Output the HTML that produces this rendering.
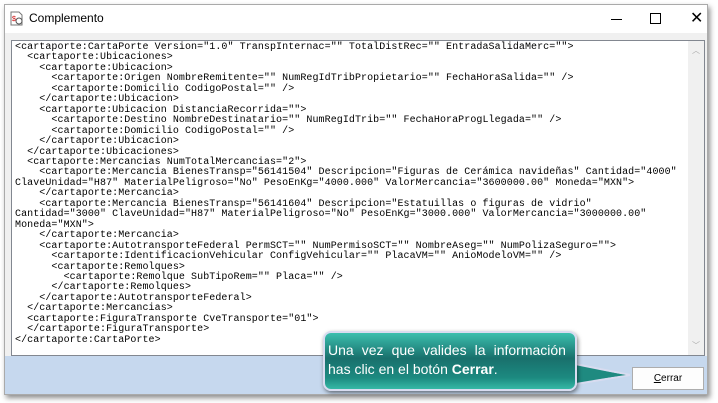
<!DOCTYPE html>
<html><head><meta charset="utf-8"><style>
body{margin:0;width:718px;height:403px;background:#fff;position:relative;overflow:hidden;font-family:"Liberation Sans",sans-serif}
.win{position:absolute;left:4px;top:4px;width:702px;height:389px;background:#f0f0f0;border:1px solid #aaa;box-shadow:2px 3px 5px rgba(0,0,0,.45)}
.title{position:absolute;left:0;top:0;width:702px;height:28px;background:#fff}
.title span{position:absolute;left:24px;top:6px;font-size:12px;color:#000}
.ta{position:absolute;left:6px;top:35px;width:692px;height:314px;background:#fff;border:1px solid #828790}
.sb{position:absolute;right:0;top:0;width:16px;height:314px;background:#f0f0f0}
pre{margin:0;position:absolute;left:3px;top:2px;font-family:"Liberation Mono",monospace;font-size:10px;letter-spacing:.07px;line-height:10.45px;color:#000}
.foot{position:absolute;left:0;top:351px;width:702px;height:38px;background:#c6d8ee}
.btn{position:absolute;left:627px;top:11px;width:70px;height:21px;background:#fdfdfd;border:1px solid #adadad;font-size:10px;text-align:center;line-height:21px}
.call{position:absolute;left:323px;top:331px;width:254px;height:60px;border:2px solid #d8dcf0;border-radius:8px;background:linear-gradient(#3bbfae,#19706c 45%,#1c8a80 80%,#36b8a6);box-shadow:1px 2px 4px rgba(0,0,0,.5);color:#fff;font-size:14px;line-height:19px;padding:8px 0 0 3px;box-sizing:border-box}
.l1{width:238px;text-align:justify;text-align-last:justify;white-space:nowrap;display:flex;justify-content:space-between}
</style></head><body>
<div class="win">
<div class="title">
<svg style="position:absolute;left:5px;top:6px" width="14" height="15" viewBox="0 0 14 15"><path d="M1 1h8l3 3v10H1z" fill="#fff" stroke="#777"/><text x="2" y="10" font-size="7" fill="#c00" font-family="Liberation Sans">$</text><circle cx="9" cy="10" r="3" fill="none" stroke="#555"/></svg>
<span>Complemento</span>
<div style="position:absolute;left:606px;top:14px;width:11px;height:1px;background:#000"></div>
<div style="position:absolute;left:645px;top:8px;width:9px;height:9px;border:1px solid #000"></div>
<div style="position:absolute;left:685px;top:3px;font-size:16px;color:#000">✕</div>
</div>
<div class="ta"><div class="sb"><div style="position:absolute;left:4px;top:4px;font-size:8px;color:#aaa">︿</div><div style="position:absolute;left:4px;bottom:4px;font-size:8px;color:#aaa">﹀</div></div>
<pre>&lt;cartaporte:CartaPorte Version="1.0" TranspInternac="" TotalDistRec="" EntradaSalidaMerc=""&gt;
  &lt;cartaporte:Ubicaciones&gt;
    &lt;cartaporte:Ubicacion&gt;
      &lt;cartaporte:Origen NombreRemitente="" NumRegIdTribPropietario="" FechaHoraSalida="" /&gt;
      &lt;cartaporte:Domicilio CodigoPostal="" /&gt;
    &lt;/cartaporte:Ubicacion&gt;
    &lt;cartaporte:Ubicacion DistanciaRecorrida=""&gt;
      &lt;cartaporte:Destino NombreDestinatario="" NumRegIdTrib="" FechaHoraProgLlegada="" /&gt;
      &lt;cartaporte:Domicilio CodigoPostal="" /&gt;
    &lt;/cartaporte:Ubicacion&gt;
  &lt;/cartaporte:Ubicaciones&gt;
  &lt;cartaporte:Mercancias NumTotalMercancias="2"&gt;
    &lt;cartaporte:Mercancia BienesTransp="56141504" Descripcion="Figuras de Cerámica navideñas" Cantidad="4000"
ClaveUnidad="H87" MaterialPeligroso="No" PesoEnKg="4000.000" ValorMercancia="3600000.00" Moneda="MXN"&gt;
    &lt;/cartaporte:Mercancia&gt;
    &lt;cartaporte:Mercancia BienesTransp="56141604" Descripcion="Estatuillas o figuras de vidrio"
Cantidad="3000" ClaveUnidad="H87" MaterialPeligroso="No" PesoEnKg="3000.000" ValorMercancia="3000000.00"
Moneda="MXN"&gt;
    &lt;/cartaporte:Mercancia&gt;
    &lt;cartaporte:AutotransporteFederal PermSCT="" NumPermisoSCT="" NombreAseg="" NumPolizaSeguro=""&gt;
      &lt;cartaporte:IdentificacionVehicular ConfigVehicular="" PlacaVM="" AnioModeloVM="" /&gt;
      &lt;cartaporte:Remolques&gt;
        &lt;cartaporte:Remolque SubTipoRem="" Placa="" /&gt;
      &lt;/cartaporte:Remolques&gt;
    &lt;/cartaporte:AutotransporteFederal&gt;
  &lt;/cartaporte:Mercancias&gt;
  &lt;cartaporte:FiguraTransporte CveTransporte="01"&gt;
  &lt;/cartaporte:FiguraTransporte&gt;
&lt;/cartaporte:CartaPorte&gt;</pre>
</div>
<div class="foot"><div class="btn"><u>C</u>errar</div></div>
</div>
<svg style="position:absolute;left:570px;top:355px" width="65" height="35"><polygon points="0,8 60,20 0,30" fill="#1f8a80" stroke="#d8dcf0" stroke-width="2"/><polygon points="0,10 56,20 0,28" fill="#1f8a80"/></svg>
<div class="call"><div class="l1"><span>Una</span><span>vez</span><span>que</span><span>valides</span><span>la</span><span>información</span></div>has clic en el botón <b>Cerrar</b>.</div>
</body></html>
